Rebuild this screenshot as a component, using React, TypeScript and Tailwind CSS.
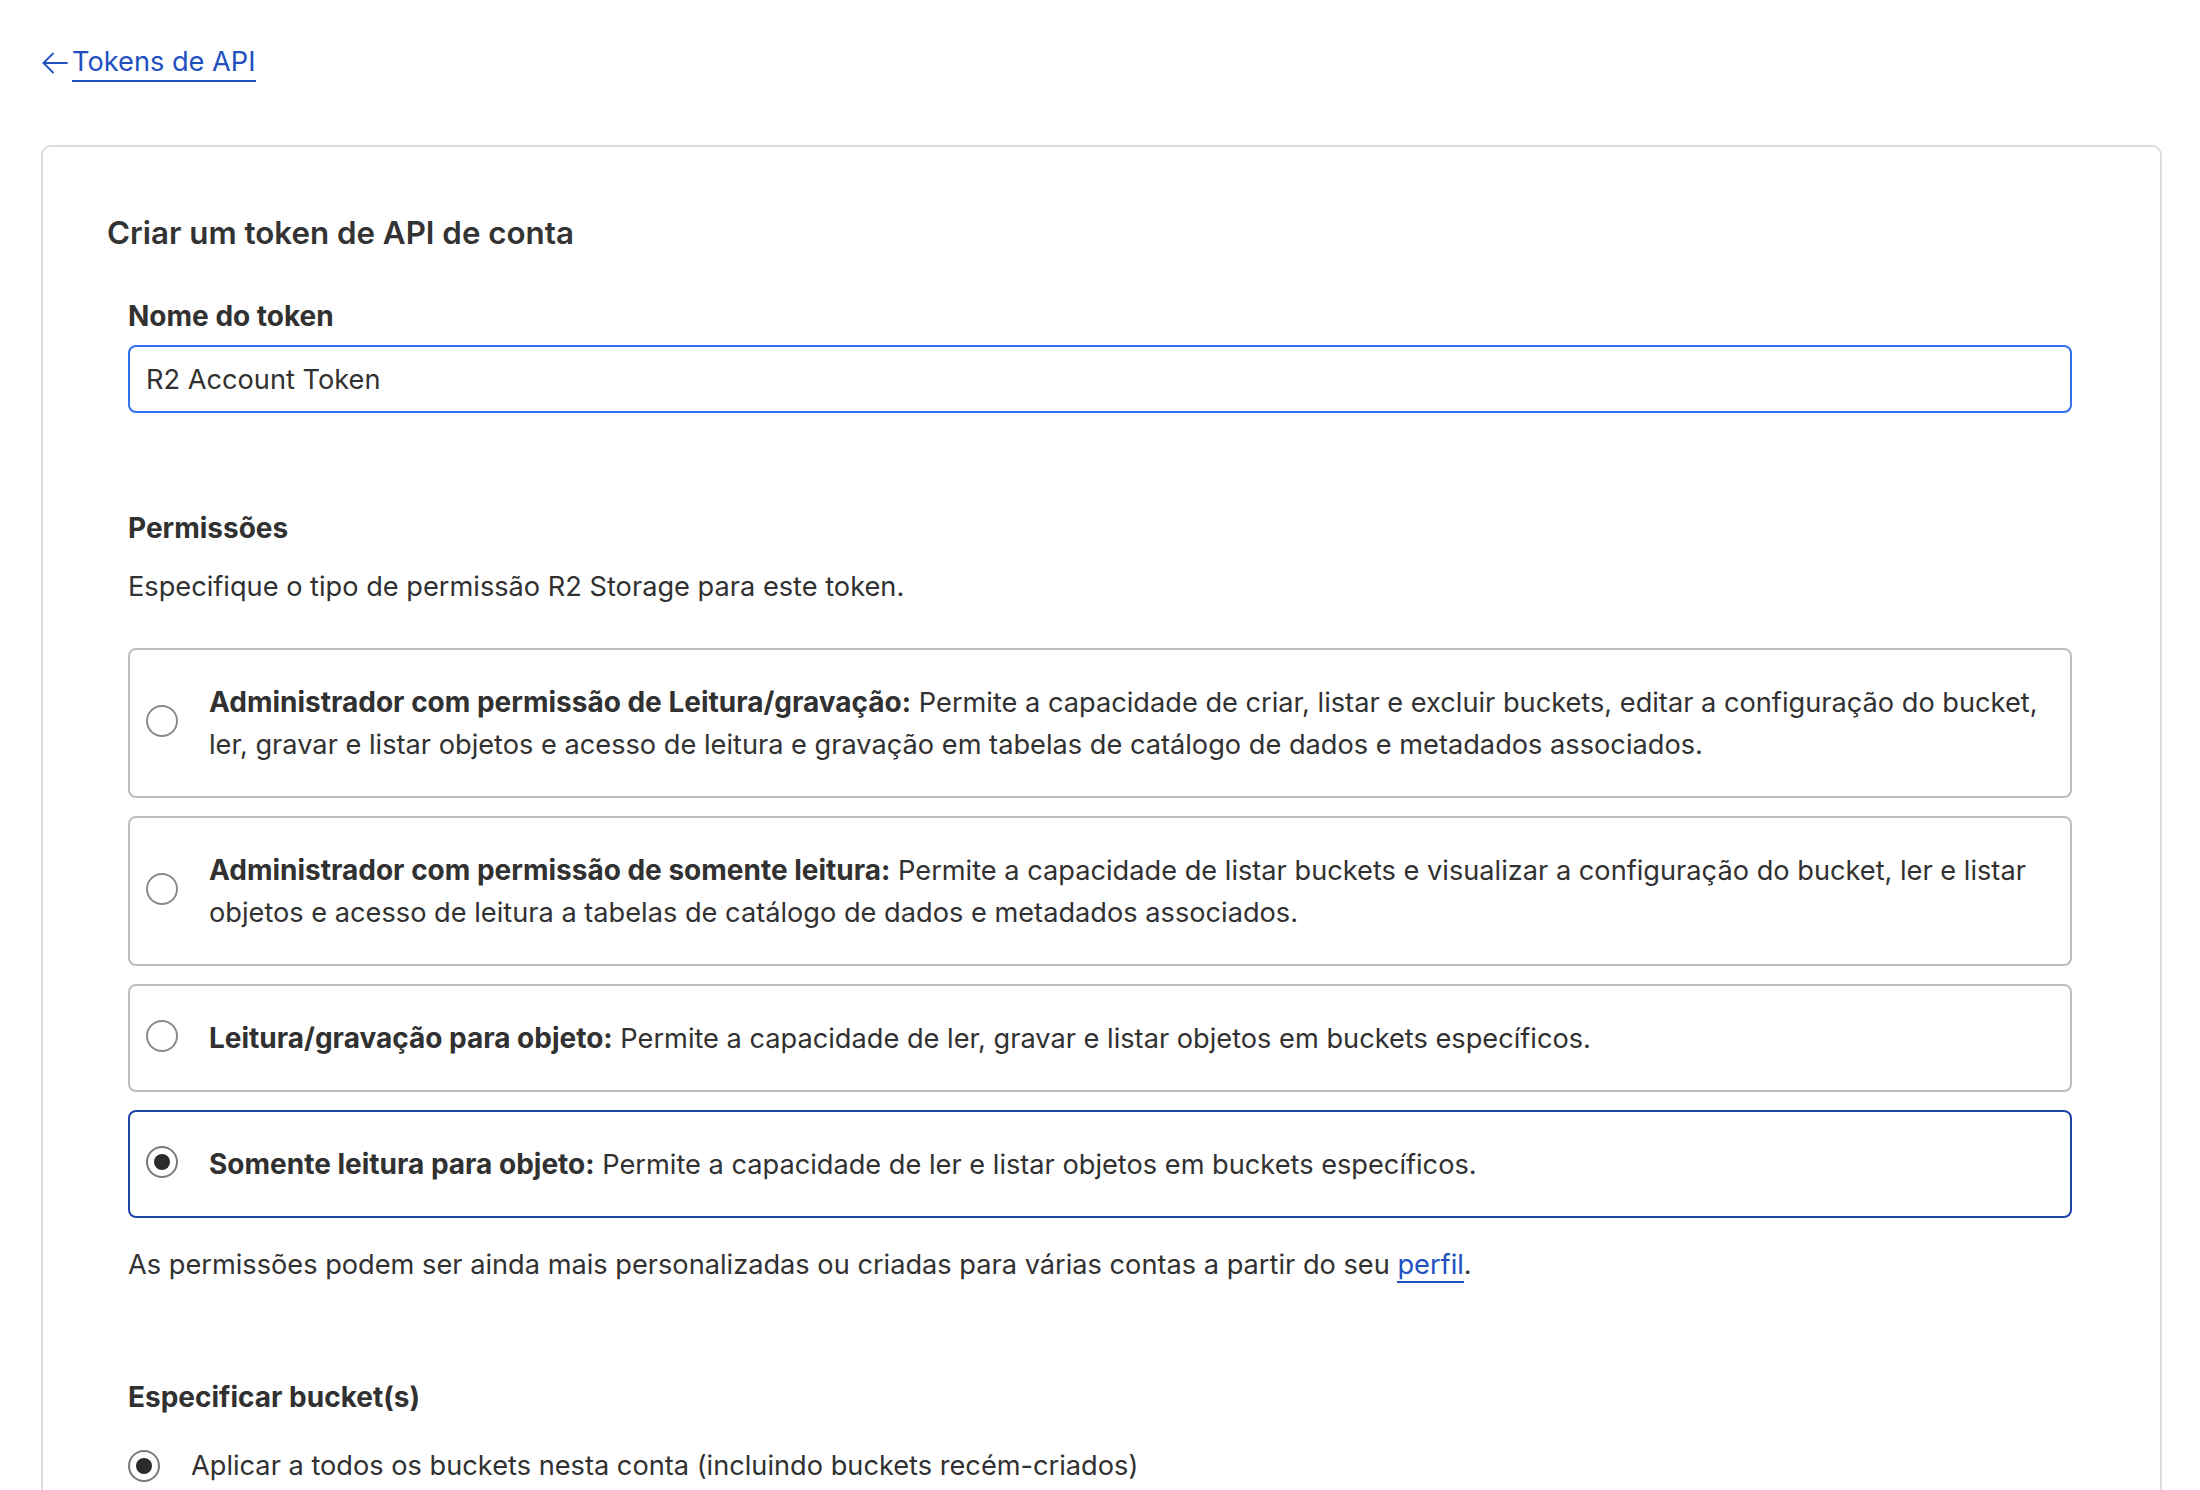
import { useState } from 'react';

const options = [
  {
    id: 'admin-rw',
    title: 'Administrador com permissão de Leitura/gravação:',
    desc: 'Permite a capacidade de criar, listar e excluir buckets, editar a configuração do bucket, ler, gravar e listar objetos e acesso de leitura e gravação em tabelas de catálogo de dados e metadados associados.',
  },
  {
    id: 'admin-ro',
    title: 'Administrador com permissão de somente leitura:',
    desc: 'Permite a capacidade de listar buckets e visualizar a configuração do bucket, ler e listar objetos e acesso de leitura a tabelas de catálogo de dados e metadados associados.',
  },
  {
    id: 'obj-rw',
    title: 'Leitura/gravação para objeto:',
    desc: 'Permite a capacidade de ler, gravar e listar objetos em buckets específicos.',
  },
  {
    id: 'obj-ro',
    title: 'Somente leitura para objeto:',
    desc: 'Permite a capacidade de ler e listar objetos em buckets específicos.',
  },
];

function Radio({ checked }: { checked: boolean }) {
  return (
    <span
      className={`flex h-[32px] w-[32px] shrink-0 items-center justify-center rounded-full border-2 bg-white ${
        checked ? 'border-[#7a7a7a]' : 'border-[#8a8a8a]'
      }`}
    >
      {checked && <span className="h-[16px] w-[16px] rounded-full bg-[#2b2b2b]" />}
    </span>
  );
}

export default function App() {
  const [name, setName] = useState('R2 Account Token');
  const [perm, setPerm] = useState('obj-ro');

  return (
    <div
      className="min-h-screen bg-white pl-[41px] pr-[38px] pt-[44px] text-[#313131]"
      style={{ fontFamily: 'Inter, "Noto Sans", sans-serif' }}
    >
      <a href="#" className="flex w-fit items-center text-[27.2px] leading-[40px] text-[#2150c0]">
        <svg width="26" height="24" viewBox="0 0 26 24" fill="none" stroke="currentColor" strokeWidth="1.8" strokeLinecap="round" strokeLinejoin="round" className="mr-[4px] ml-[1px]">
          <path d="M25 12H1.5" />
          <path d="M11 2.5L1.5 12l9.5 9.5" />
        </svg>
        <span className="border-b-2 border-[#2150c0] leading-[36px]">Tokens de API</span>
      </a>

      <div className="mt-[63px] rounded-[10px] border-2 border-[#dcdcdc] px-[64px] pt-[65px] pb-[80px]">
        <h1 className="text-[31.3px] font-semibold leading-[42px] text-[#333333]">Criar um token de API de conta</h1>

        <div className="pl-[21px] pr-[24px]">
          <label className="mt-[42px] block text-[28px] font-bold leading-[40px]">Nome do token</label>
          <input
            value={name}
            onChange={(e) => setName(e.target.value)}
            className="mt-[9px] block h-[68px] w-full rounded-[8px] border-2 border-[#3370f5] px-[16px] text-[27.2px] text-[#313131] outline-none"
          />

          <h2 className="mt-[95px] text-[28px] font-bold leading-[40px]">Permissões</h2>
          <p className="mt-[18px] text-[27.2px] leading-[42px]">
            Especifique o tipo de permissão R2 Storage para este token.
          </p>

          <div className="mt-[40px] flex flex-col gap-[18px]">
            {options.map((o) => {
              const checked = perm === o.id;
              return (
                <label
                  key={o.id}
                  onClick={() => setPerm(o.id)}
                  className={`flex cursor-pointer items-center rounded-[8px] border-2 py-[30.5px] pl-[16px] pr-[32px] ${
                    checked ? 'border-[#1d45a8]' : 'border-[#bdbdbd]'
                  }`}
                >
                  <span className="-mt-[4px]">
                    <Radio checked={checked} />
                  </span>
                  <span className="ml-[31px] text-[27.2px] leading-[42px]">
                    <b className="text-[28px] font-bold">{o.title}</b> {o.desc}
                  </span>
                </label>
              );
            })}
          </div>

          <p className="mt-[26px] text-[27.2px] leading-[42px]">
            As permissões podem ser ainda mais personalizadas ou criadas para várias contas a partir do seu{' '}
            <a href="#" className="border-b-2 border-[#2150c0] text-[#2150c0]">perfil</a>.
          </p>

          <h2 className="mt-[91px] text-[28px] font-bold leading-[40px]">Especificar bucket(s)</h2>
          <div className="mt-[28px] flex items-center">
            <Radio checked />
            <span className="ml-[31px] text-[27.2px] leading-[42px]">
              Aplicar a todos os buckets nesta conta (incluindo buckets recém-criados)
            </span>
          </div>
        </div>
      </div>
    </div>
  );
}
